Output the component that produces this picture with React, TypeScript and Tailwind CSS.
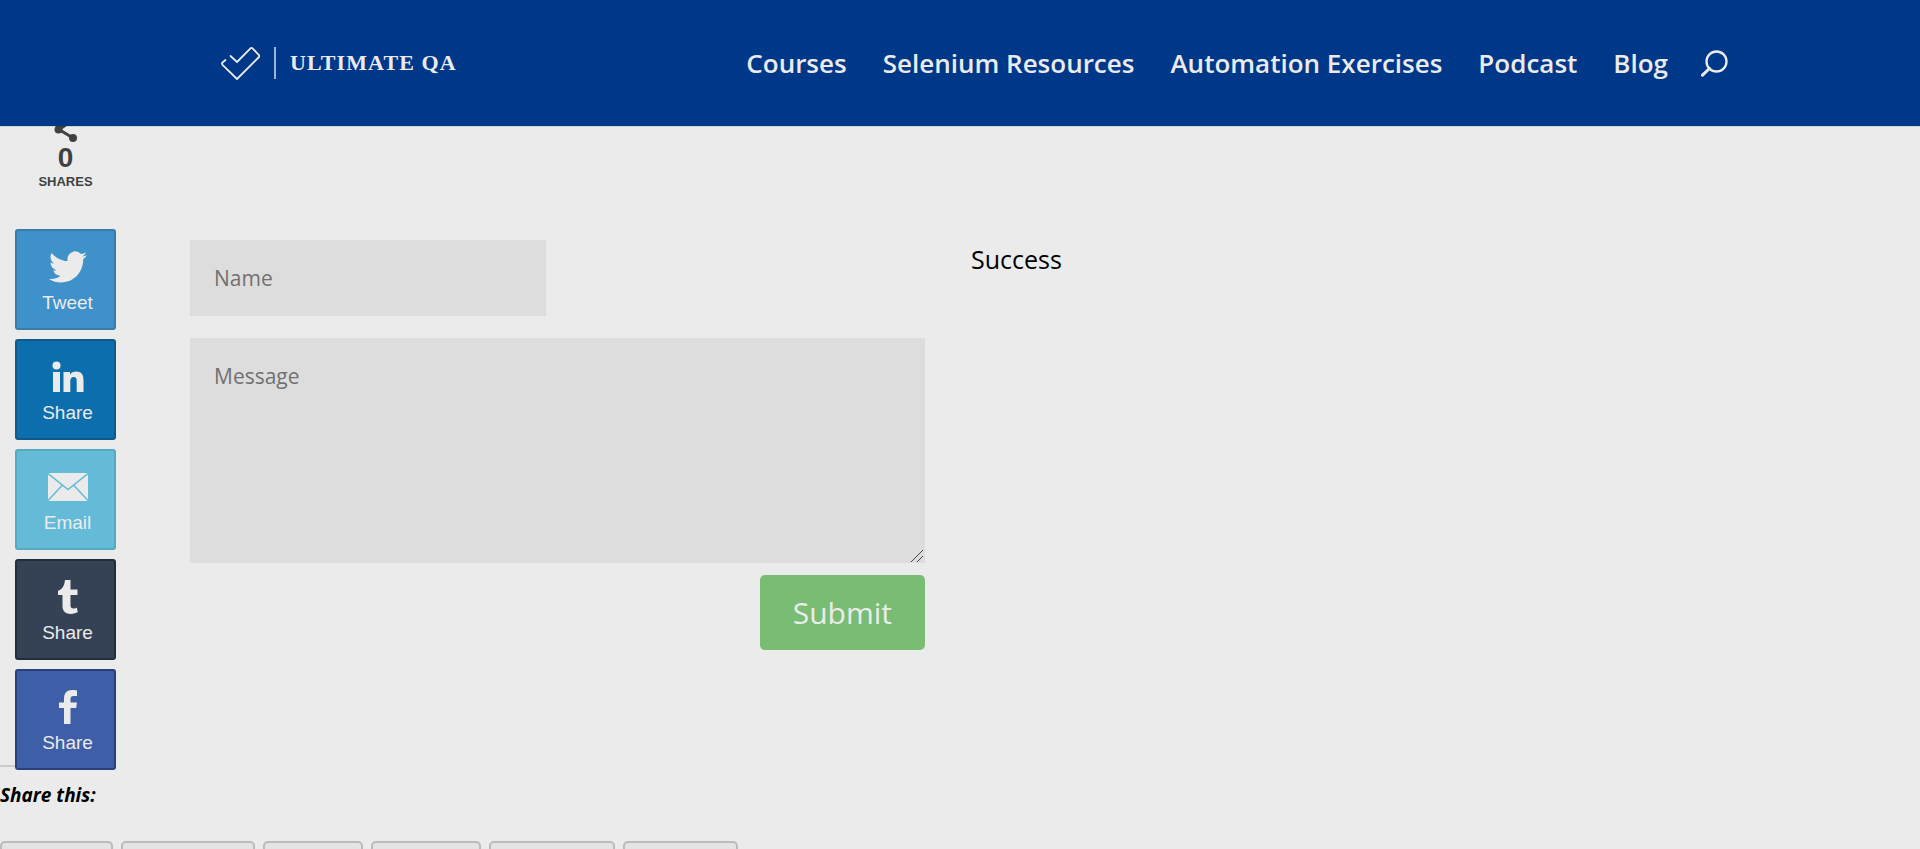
import React from "react";

const navLinks = ["Courses", "Selenium Resources", "Automation Exercises", "Podcast", "Blog"];

function TwitterIcon() {
  return (
    <svg viewBox="0 0 24 24" className="h-[38px] w-[38px]" fill="currentColor" aria-hidden="true">
      <path d="M23.954 4.569a10 10 0 0 1-2.825.775 4.958 4.958 0 0 0 2.163-2.723 9.99 9.99 0 0 1-3.127 1.184 4.92 4.92 0 0 0-8.384 4.482C7.691 8.094 4.066 6.13 1.64 3.161a4.822 4.822 0 0 0-.666 2.475c0 1.71.87 3.213 2.188 4.096a4.904 4.904 0 0 1-2.228-.616v.061a4.923 4.923 0 0 0 3.946 4.827 4.996 4.996 0 0 1-2.212.085 4.937 4.937 0 0 0 4.604 3.417 9.868 9.868 0 0 1-6.102 2.105c-.39 0-.779-.023-1.17-.067a13.995 13.995 0 0 0 7.557 2.209c9.054 0 13.999-7.496 13.999-13.986 0-.209 0-.42-.015-.63a9.936 9.936 0 0 0 2.46-2.548l-.047-.02z" />
    </svg>
  );
}

function LinkedInIcon() {
  return (
    <svg viewBox="0 0 32 32" className="h-8 w-8" fill="currentColor" aria-hidden="true">
      <circle cx="4.5" cy="4.5" r="4" />
      <path d="M1 11h7v20H1zM11.5 11h6.6v2.7c1.2-2 3.300-3.200 6-3.200 5.300 0 7.400 3.200 7.400 8.700V31h-6.800V20.200c0-2.600-.8-4.100-3-4.100-2.300 0-3.400 1.600-3.400 4.200V31h-6.800z" />
    </svg>
  );
}

function MailIcon() {
  return (
    <svg viewBox="0 0 40 28" className="h-7 w-10" aria-hidden="true">
      <rect width="40" height="28" fill="currentColor" />
      <path d="M0 .5 20 16.500 40 .5M0 27.500 14.500 12M40 27.500 25.500 12" fill="none" stroke="#63bbd8" strokeWidth="1.500" />
    </svg>
  );
}

function TumblrIcon() {
  return (
    <svg viewBox="0 0 20 34" className="h-[34px] w-5" fill="currentColor" aria-hidden="true">
      <path d="M7 0h5.500v9.500h7V15h-7v10c0 2.600 1 3.500 3 3.500 1.200 0 2.400-.6 3.300-1.100l1 4.700c-1.600 1.100-4 1.900-7 1.900-5.300 0-8.300-2.800-8.300-7.700V15H0v-4.300C4 9.500 6.200 6.500 7 0z" />
    </svg>
  );
}

function FacebookIcon() {
  return (
    <svg viewBox="0 0 20 34" className="h-[34px] w-5" fill="currentColor" aria-hidden="true">
      <path d="M19 .5v5.500h-3.300c-2.500 0-3.200 1.100-3.200 3.200v3.300H19l-.8 5.500h-5.700v16H6V18H1v-5.500h5V8.700C6 3.200 8.800 0 14.400 0c2 0 3.500.2 4.600.5z" />
    </svg>
  );
}

function ShareIcon() {
  return (
    <svg viewBox="0 0 24 26" className="h-[26px] w-6" aria-hidden="true">
      <path d="M19 4 5 13.500 19 22" fill="none" stroke="currentColor" strokeWidth="3" />
      <g fill="currentColor">
        <circle cx="19" cy="4" r="4" />
        <circle cx="4.500" cy="13.500" r="4" />
        <circle cx="19" cy="22" r="4" />
      </g>
    </svg>
  );
}

const shareButtons = [
  { id: "twitter", label: "Tweet", icon: <TwitterIcon />, style: "border-[#3a7ca9] bg-[#3e91c9]" },
  { id: "linkedin", label: "Share", icon: <LinkedInIcon />, style: "border-[#0f5a88] bg-[#0d6eae]" },
  { id: "email", label: "Email", icon: <MailIcon />, style: "border-[#57a9bf] bg-[#63bbd8]" },
  { id: "tumblr", label: "Share", icon: <TumblrIcon />, style: "border-[#222e3c] bg-[#354256]" },
  { id: "facebook", label: "Share", icon: <FacebookIcon />, style: "border-[#29417a] bg-[#3e5fa7]" },
];

const bottomButtons = [
  { id: "b1", width: "w-[113px]" },
  { id: "b2", width: "w-[134px]" },
  { id: "b3", width: "w-[100px]" },
  { id: "b4", width: "w-[110px]" },
  { id: "b5", width: "w-[126px]" },
  { id: "b6", width: "w-[115px]" },
];

function Header() {
  return (
    <header className="relative z-20 bg-[#003889] text-[#ebebeb] shadow-[0_1px_0_rgba(0,0,0,0.1)]">
      <div className="mx-auto flex h-[126px] w-4/5 items-center justify-between">
        <a href="#" className="flex items-center pl-7">
          <svg viewBox="0 0 40 34" className="h-[34px] w-10" fill="none" stroke="currentColor" strokeWidth="1.800" strokeLinejoin="round" strokeLinecap="round" aria-hidden="true">
            <path d="M10.500 10 17 16 30.500 2.300Q31.500 1.500 32.500 2.300L39 9.200Q39.700 10.200 39 11L17 33 2.500 18.800Q1.500 17.500 2.500 16.500L5.500 14" />
          </svg>
          <span className="ml-3.5 h-8 w-0.5 bg-[#9fb4d2]" />
          <span className="ml-3.5 font-['Liberation_Serif',serif] text-[22px] leading-8 font-bold tracking-wider">ULTIMATE QA</span>
        </a>
        <div className="flex items-center gap-8">
          <nav className="flex items-center gap-9 text-[26px] leading-9 font-semibold">
            {navLinks.map((label) => (
              <a key={label} href="#">{label}</a>
            ))}
          </nav>
          <button type="button" aria-label="Search">
            <svg viewBox="0 0 28 28" className="block h-7 w-7" fill="none" stroke="currentColor" strokeWidth="2.300" strokeLinecap="round" aria-hidden="true">
              <circle cx="16.500" cy="12.500" r="10" />
              <path d="M9.500 19.500 2.500 26.200" strokeWidth="3" />
            </svg>
          </button>
        </div>
      </div>
    </header>
  );
}

function ShareBar() {
  return (
    <aside className="relative z-10 -mt-2.5 -mb-4 w-[190px] shrink-0 pl-[15px] font-['Liberation_Sans',sans-serif]">
      <div className="flex h-[113px] w-[101px] flex-col items-center text-[#404242]">
        <ShareIcon />
        <span className="pt-0.5 text-[28px] leading-7 font-bold">0</span>
        <span className="text-[13px] leading-5 font-bold">SHARES</span>
      </div>
      <div className="flex flex-col gap-[9px]">
        {shareButtons.map((b) => (
          <button
            key={b.id}
            type="button"
            className={`flex h-[101px] w-[101px] flex-col items-center rounded-[3px] border-2 pt-4 pl-1 text-[#ebebeb] ${b.style}`}
          >
            <span className="flex h-10 items-center">{b.icon}</span>
            <span className="pt-0.5 text-[19px] leading-7">{b.label}</span>
          </button>
        ))}
      </div>
    </aside>
  );
}

export default function App() {
  return (
    <div className="flex h-screen flex-col overflow-hidden bg-[#ebebeb] font-['Open_Sans',sans-serif] text-black">
      <Header />
      <main>
        <div className="flex items-start pr-[214px]">
          <ShareBar />
          <div className="grid flex-1 grid-cols-2 gap-[46px] pt-[114px]">
            <form className="flex flex-col items-start" onSubmit={(e) => e.preventDefault()}>
              <input
                aria-label="Name"
                placeholder="Name"
                className="h-[76px] w-[356px] bg-[#dddddd] px-6 text-[21px] placeholder:text-[#717171]"
              />
              <div className="relative mt-[22px] w-full">
                <textarea
                  aria-label="Message"
                  placeholder="Message"
                  className="block h-[225px] w-full resize-none bg-[#dddddd] px-6 pt-[22px] text-[21px] leading-8 placeholder:text-[#717171]"
                />
                <svg viewBox="0 0 12 12" className="pointer-events-none absolute right-0.5 bottom-px h-3 w-3" stroke="#444444" aria-hidden="true">
                  <path d="M0 12 12 0M6 12 12 6" />
                </svg>
              </div>
              <button type="submit" className="mt-3 self-end rounded-[5px] bg-[#79bd74] px-[33px] py-4 text-[30px] leading-[43px] text-[#ebebeb]">
                Submit
              </button>
            </form>
            <p className="text-[25px] leading-[38px]">Success</p>
          </div>
        </div>
        <section className="mt-[11px]">
          <div className="h-0.5 w-12 bg-[#cccccc]" />
          <h2 className="mt-4 text-[19px] leading-6 font-bold italic">Share this:</h2>
          <div className="mt-[34px] flex gap-2">
            {bottomButtons.map((b) => (
              <button key={b.id} type="button" aria-label="Share" className={`h-10 shrink-0 rounded-[5px] border-2 border-[#bbbbbb] bg-[#e4e4e4] ${b.width}`} />
            ))}
          </div>
        </section>
      </main>
    </div>
  );
}
